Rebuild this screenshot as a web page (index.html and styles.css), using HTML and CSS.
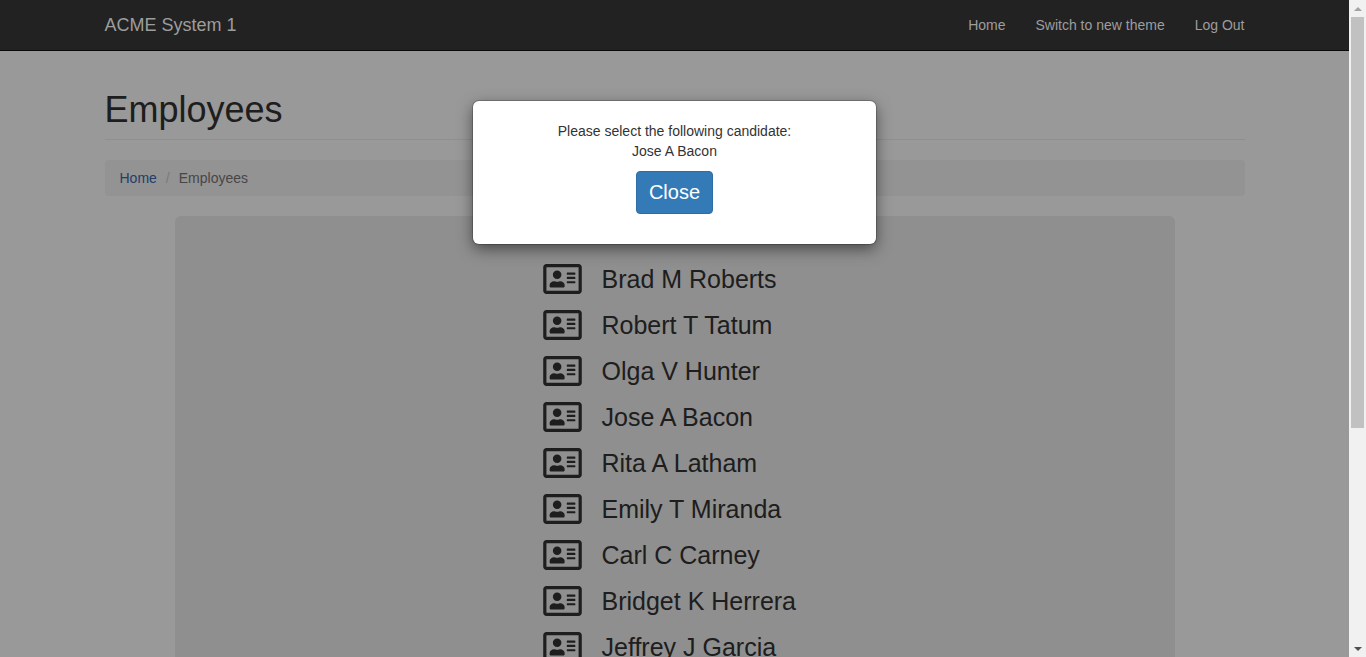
FILE: index.html
```html
<!DOCTYPE html>
<html lang="en">
<head>
<meta charset="utf-8">
<meta name="viewport" content="width=device-width, initial-scale=1">
<title>Employees</title>
<link rel="stylesheet" href="styles.css">
</head>
<body>
<svg class="sprite" aria-hidden="true">
  <symbol id="address-card" viewBox="0 32 576 448">
    <path d="M528 32H48C21.500 32 0 53.500 0 80v352c0 26.500 21.500 48 48 48h480c26.500 0 48-21.500 48-48V80c0-26.500-21.500-48-48-48zm0 400H48V80h480v352zM208 256c35.300 0 64-28.700 64-64s-28.700-64-64-64-64 28.700-64 64 28.700 64 64 64zm-89.600 128h179.200c12.400 0 22.400-8.600 22.400-19.200v-19.200c0-31.800-30.100-57.600-67.200-57.600-10.800 0-18.700 8-44.800 8-26.900 0-33.400-8-44.800-8-37.100 0-67.200 25.800-67.200 57.600v19.200c0 10.600 10 19.200 22.400 19.200zM360 320h112c4.400 0 8-3.600 8-8v-16c0-4.400-3.600-8-8-8H360c-4.400 0-8 3.600-8 8v16c0 4.400 3.600 8 8 8zm0-64h112c4.400 0 8-3.600 8-8v-16c0-4.400-3.600-8-8-8H360c-4.400 0-8 3.600-8 8v16c0 4.400 3.600 8 8 8zm0-64h112c4.400 0 8-3.600 8-8v-16c0-4.400-3.600-8-8-8H360c-4.400 0-8 3.600-8 8v16c0 4.400 3.600 8 8 8z"/>
  </symbol>
</svg>
<div class="page">
  <header class="navbar">
    <div class="container navbar-inner">
      <a class="brand" href="#">ACME System 1</a>
      <nav class="nav">
        <a href="#">Home</a>
        <a href="#">Switch to new theme</a>
        <a href="#">Log Out</a>
      </nav>
    </div>
  </header>
  <main class="content">
    <div class="container">
      <h1 class="page-title">Employees</h1>
      <ol class="breadcrumb">
        <li><a href="#">Home</a></li>
        <li>Employees</li>
      </ol>
      <section class="panel">
        <ul class="employees">
          <li><svg class="icon"><use href="#address-card"/></svg>Brad M Roberts</li>
          <li><svg class="icon"><use href="#address-card"/></svg>Robert T Tatum</li>
          <li><svg class="icon"><use href="#address-card"/></svg>Olga V Hunter</li>
          <li><svg class="icon"><use href="#address-card"/></svg>Jose A Bacon</li>
          <li><svg class="icon"><use href="#address-card"/></svg>Rita A Latham</li>
          <li><svg class="icon"><use href="#address-card"/></svg>Emily T Miranda</li>
          <li><svg class="icon"><use href="#address-card"/></svg>Carl C Carney</li>
          <li><svg class="icon"><use href="#address-card"/></svg>Bridget K Herrera</li>
          <li><svg class="icon"><use href="#address-card"/></svg>Jeffrey J Garcia</li>
        </ul>
      </section>
    </div>
    <div class="backdrop">
      <div class="dialog" role="dialog" aria-modal="true" aria-labelledby="dialog-text">
        <p id="dialog-text">Please select the following candidate:<br>Jose A Bacon</p>
        <button class="close" type="button">Close</button>
      </div>
    </div>
  </main>
</div>
<div class="scrollbar" aria-hidden="true">
  <svg class="arrow" viewBox="0 0 17 17"><path d="M5 11h8L9 7z" fill="#a3a3a3"/></svg>
  <div class="track"><div class="thumb"></div></div>
  <svg class="arrow" viewBox="0 0 17 17"><path d="M5 7h8l-4 4z" fill="#505050"/></svg>
</div>
</body>
</html>
```

FILE: styles.css
```css
* {
  box-sizing: border-box;
}

body {
  margin: 0;
  display: flex;
  height: 100vh;
  overflow: hidden;
  background: #fff;
  color: #333;
  font-family: "Liberation Sans", Arial, sans-serif;
  font-size: 14px;
  line-height: 20px;
}

a {
  color: #337ab7;
  text-decoration: none;
}

.sprite {
  position: absolute;
  width: 0;
  height: 0;
}

.page {
  flex: 1;
  min-width: 0;
  display: flex;
  flex-direction: column;
}

.container {
  width: 100%;
  max-width: 1170px;
  margin: 0 auto;
  padding: 0 15px;
}

.navbar {
  background: #222;
  border-bottom: 1px solid #080808;
}

.navbar-inner {
  display: flex;
  align-items: center;
  justify-content: space-between;
}

.navbar a {
  color: #9d9d9d;
  padding: 15px 0;
}

.navbar .brand {
  font-size: 18px;
}

.nav {
  display: flex;
  gap: 30px;
}

.content {
  position: relative;
  flex: 1;
  min-height: 0;
  overflow: hidden;
}

.page-title {
  margin: 39px 0 20px;
  padding-bottom: 10px;
  border-bottom: 1px solid #eee;
  font-size: 36px;
  font-weight: 500;
  line-height: 39px;
}

.breadcrumb {
  display: flex;
  margin: 0 0 20px;
  padding: 8px 15px;
  list-style: none;
  background: #f5f5f5;
  border-radius: 4px;
  color: #777;
}

.breadcrumb a {
  color: #3a68b0;
}

.breadcrumb li + li::before {
  content: "/";
  padding: 0 9px;
  color: #ccc;
}

.panel {
  display: flex;
  justify-content: center;
  max-width: 1000px;
  margin: 0 auto;
  padding: 40px 60px;
  background: #eee;
  border-radius: 6px;
}

.employees {
  min-width: 264px;
  margin: 0;
  padding: 0;
  list-style: none;
  font-size: 25px;
}

.employees li {
  display: flex;
  align-items: center;
  gap: 20px;
  height: 46px;
}

.icon {
  width: 39px;
  height: 30px;
  fill: currentColor;
}

.backdrop {
  position: absolute;
  inset: 0;
  display: flex;
  justify-content: center;
  align-items: flex-start;
  padding-top: 50px;
  background: rgba(0, 0, 0, 0.4);
}

.dialog {
  width: 403px;
  max-width: 90%;
  padding: 20px 20px 30px;
  background: #fff;
  border-radius: 6px;
  box-shadow: 0 0 0 1px rgba(0, 0, 0, 0.2), 0 5px 15px rgba(0, 0, 0, 0.5);
  text-align: center;
}

.dialog p {
  margin: 0 0 10px;
}

.close {
  display: block;
  margin: 0 auto;
  padding: 6px 12px;
  background: #337ab7;
  border: 1px solid #2e6da4;
  border-radius: 4px;
  color: #fff;
  font: inherit;
  font-size: 20px;
  line-height: 29px;
  cursor: pointer;
}

.scrollbar {
  display: flex;
  flex-direction: column;
  flex: 0 0 17px;
  background: #f1f1f1;
}

.arrow {
  width: 17px;
  height: 17px;
}

.track {
  flex: 1;
  padding: 0 2px;
}

.thumb {
  height: 66%;
  background: #c1c1c1;
}
```
